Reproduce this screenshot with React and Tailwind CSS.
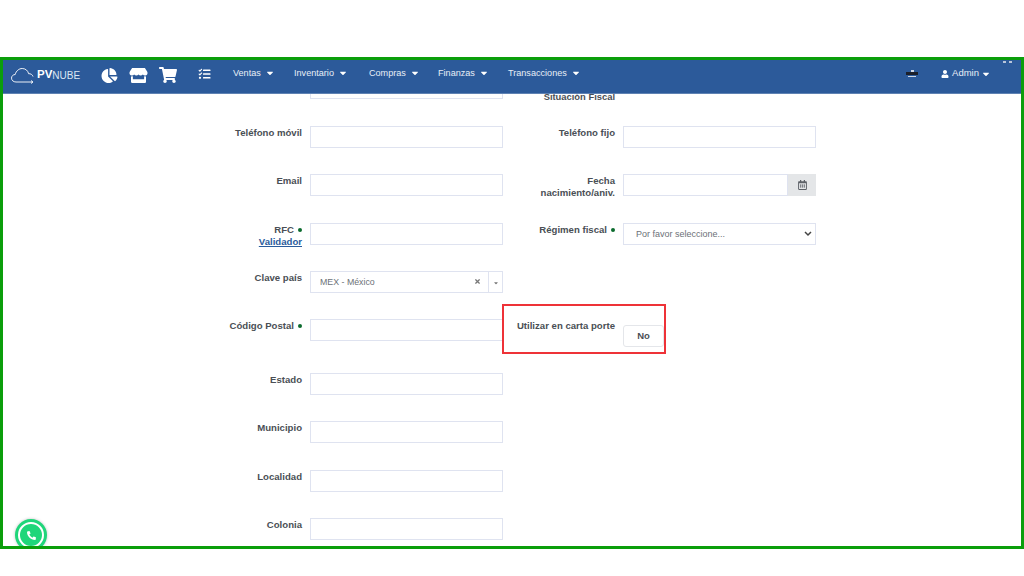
import { FaChartPie, FaStore, FaShoppingCart, FaTasks, FaUser, FaCaretDown, FaTimes, FaRegCalendarAlt, FaPhoneAlt } from 'react-icons/fa';

const menus = [
  { name: 'Ventas', w: 'w-[61px]' },
  { name: 'Inventario', w: 'w-[75px]' },
  { name: 'Compras', w: 'w-[69px]' },
  { name: 'Finanzas', w: 'w-[70px]' },
  { name: 'Transacciones', w: 'w-[92px]' },
];

// Cloud logo
function CloudLogo() {
  return (
    <svg width="24" height="17" viewBox="0 0 24 16" fill="none" stroke="white" strokeWidth="0.9">
      <path d="M5 14.5C2.5 14.5 0.5 12.8 0.5 10.6C0.5 8.6 2.2 7 4.2 7C5 3.5 8 1 11.2 1C14.5 1 17 3.2 17.6 6.2C19.6 6 21.5 7.2 22 9" />
      <path d="M5 14.5H21.5M20 13L22 14.5L20 16" />
    </svg>
  );
}

function Dot() {
  return <span className="inline-block w-1 h-1 rounded-full bg-[#0b6b2e] ml-1 mb-[1px]" />;
}

function Label({ children }) {
  return <div className="w-[299px] text-right text-[9.6px] leading-[12px] font-bold text-[#4a4f55] pt-[1px]">{children}</div>;
}

function Input() {
  return <div className="w-[193px] h-[22px] border border-[#dfe3f0] bg-white shrink-0" />;
}

function Row({ left, right, className = 'h-[48.3px]' }) {
  return <div className={`flex ${className}`}>{left}{right}</div>;
}

function LeftField({ label }) {
  return (
    <div className="flex w-[500px] shrink-0 gap-2">
      <Label>{label}</Label>
      <Input />
    </div>
  );
}

function RightField({ label, children }) {
  return (
    <div className="flex gap-2">
      <div className="w-[112px] whitespace-nowrap text-right text-[9.6px] leading-[12px] font-bold text-[#4a4f55] pt-[1px]">{label}</div>
      {children}
    </div>
  );
}

export default function App() {
  return (
    <div className="w-[1024px] h-[576px] bg-white pt-[57px] overflow-hidden font-['Liberation_Sans',sans-serif]">
      <div className="relative h-[492px] border-[3px] border-[#0b9e0b] overflow-hidden flex flex-col bg-white">
        {/* Top bar */}
        <header className="h-[34px] pb-[6px] bg-[#2c5a9a] border-b border-[#5f82b3] flex items-center text-white shrink-0 relative z-10">
          <div className="flex items-center pl-[8px] w-[95px] mt-[3px]">
            <CloudLogo />
            <span className="ml-[2px] text-[11.5px] font-bold">PV</span>
            <span className="text-[10px] text-[#dce6f3]">NUBE</span>
          </div>
          <div className="flex items-center gap-[11px] ml-[3px] mt-[3px]">
            <FaChartPie className="w-[17px] h-[15px]" />
            <FaStore className="w-[19px] h-[15px]" />
            <FaShoppingCart className="w-[18px] h-[16px]" />
          </div>
          <FaTasks className="w-[13px] h-[12px] ml-[21px]" />
          <nav className="flex ml-[22px]">
            {menus.map((m) => (
              <div key={m.name} className={`${m.w} flex items-center gap-[4px] text-[9.1px] text-[#e8eef7]`}>
                {m.name}
                <FaCaretDown className="w-[10px] h-[10px] text-white" />
              </div>
            ))}
          </nav>
          <div className="ml-auto flex items-center">
            <div className="flex flex-col items-center w-[12px] mr-[23px]">
              <span className="w-[3px] h-[2px] bg-[#cfd8e6]" />
              <span className="w-[12px] h-[3px] bg-[#1b1f2a]" />
              <span className="w-[8px] h-[1px] mt-[1px] bg-[#cfd8e6]" />
            </div>
            <FaUser className="w-[8px] h-[8px]" />
            <span className="ml-[3px] text-[9.5px] text-[#e8eef7] -mt-[1px]">Admin</span>
            <FaCaretDown className="w-[10px] h-[10px] ml-[2px] mr-[30px]" />
          </div>
          <span className="absolute right-[9px] top-[1px] w-[9px] h-[2px] border-x-[3px] border-[#b9c6da]" />
        </header>

        {/* Form, scrolled so the first row is cut by the bar */}
        <main className="flex-1 overflow-hidden">
          <div className="flex h-[32px]">
            <div className="flex w-[500px] shrink-0 justify-end">
              <div className="w-[193px] h-[5px] border border-t-0 border-[#dfe3f0]" />
            </div>
            <div className="w-[112px] text-right text-[9.4px] leading-[12px] font-bold text-[#4a4f55] -mt-[3px]">Situación Fiscal</div>
          </div>

          <Row
            left={<LeftField label="Teléfono móvil" />}
            right={<RightField label="Teléfono fijo"><Input /></RightField>}
          />
          <Row
            left={<LeftField label="Email" />}
            right={
              <RightField label={<>Fecha<br />nacimiento/aniv.</>}>
                <div className="flex w-[193px] h-[22px]">
                  <div className="flex-1 border border-[#dfe3f0]" />
                  <div className="w-[28px] bg-[#e4e6e8] flex items-center justify-center">
                    <FaRegCalendarAlt className="w-[9px] h-[10px] text-[#5c6066]" />
                  </div>
                </div>
              </RightField>
            }
          />
          <Row
            left={<LeftField label={<>RFC<Dot /><br /><span className="text-[#2b5c9c] underline">Validador</span></>} />}
            right={
              <RightField label={<>Régimen fiscal<Dot /></>}>
                <div className="w-[193px] h-[22px] border border-[#dfe3f0] flex items-center justify-between pl-[12px] pr-[3px]">
                  <span className="text-[9px] text-[#6c7177] mt-[2px]">Por favor seleccione...</span>
                  <svg width="8" height="6" viewBox="0 0 8 6" fill="none" stroke="#444" strokeWidth="1.5"><path d="M1 1L4 4L7 1" /></svg>
                </div>
              </RightField>
            }
          />
          <Row
            left={
              <div className="flex w-[500px] shrink-0 gap-2">
                <Label>Clave país</Label>
                <div className="w-[193px] h-[22px] border border-[#dfe3f0] flex items-center pl-[9px] text-[8.8px] text-[#6c7177]">
                  <span className="flex-1 mt-[1px]">MEX - México</span>
                  <FaTimes className="w-[7px] h-[7px] text-[#777] mr-[7px]" />
                  <div className="w-[14px] h-full border-l border-[#dfe3f0] flex items-center justify-center">
                    <FaCaretDown className="w-[6px] h-[6px] mt-[3px] text-[#777]" />
                  </div>
                </div>
              </div>
            }
          />
          <Row
            className="h-[54px]"
            left={<LeftField label={<>Código Postal<Dot /></>} />}
            right={
              <RightField label="Utilizar en carta porte">
                <div className="w-[41px] h-[22px] mt-[6px] border border-[#e4e6ea] rounded-[3px] flex items-center justify-center text-[9.5px] font-bold text-[#4a4f55]">No</div>
              </RightField>
            }
          />
          <Row left={<LeftField label="Estado" />} />
          <Row left={<LeftField label="Municipio" />} />
          <Row left={<LeftField label="Localidad" />} />
          <Row left={<LeftField label="Colonia" />} />
        </main>

        {/* Highlight over the field */}
        <div className="absolute left-[499px] top-[244px] w-[164px] h-[50px] border-2 border-[#ee3238]" />

        {/* Floating phone button */}
        <div className="absolute left-[12px] top-[459px] w-[32px] h-[32px] rounded-full bg-[#1fd67a] flex items-center justify-center shadow-[0_0_3px_rgba(0,0,0,0.25)]">
          <div className="w-[26px] h-[26px] rounded-full border-2 border-white flex items-center justify-center">
            <FaPhoneAlt className="w-[9px] h-[9px] text-white" />
          </div>
        </div>
      </div>
    </div>
  );
}
